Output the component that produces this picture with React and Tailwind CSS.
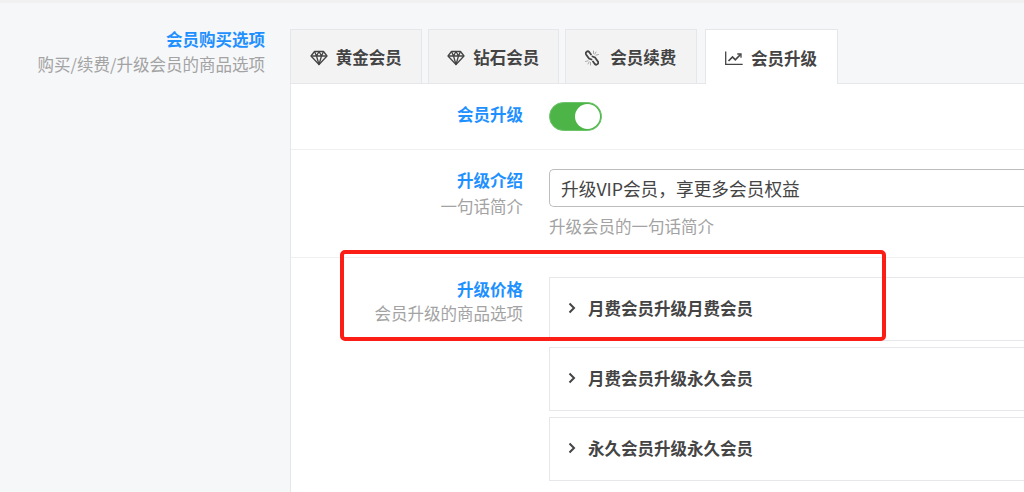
import React from "react";

function Gem() {
  return (
    <svg viewBox="0 0 18 16" fill="none" stroke="currentColor" strokeWidth="1.3" strokeLinejoin="round" className="h-[16px] w-[18px] shrink-0">
      <path d="M4.500 1.500h9l3.500 4.500-8 8.500-8-8.500z" />
      <path d="M1 6h16M6.500 6 9 14.500 11.500 6M4.500 1.500 6.500 6 9 1.500 11.500 6l2-4.500" />
    </svg>
  );
}

function LinkBroken() {
  return (
    <svg viewBox="0 0 14 16" fill="none" stroke="currentColor" strokeWidth="1.8" strokeLinecap="round" className="mr-[3px] h-[16px] w-[14px] shrink-0">
      <path d="M6 4.500 4.200 2a2 2 0 0 0-3.100 2.500L4 8.500l2.500 1" />
      <path d="M8 11.500l1.800 2.500a2 2 0 0 0 3.100-2.500L10 7.500l-2.500-1" />
      <path d="M8.500 1v2.500M11 2 9.800 4.200M13.500 4.500l-2.500.7M.5 11.500l2.500-.7M3 14l1.200-2.200M5.500 15v-2.500" strokeWidth="1" stroke="#a8a8a8" />
    </svg>
  );
}

function Chart() {
  return (
    <svg viewBox="0 0 18 16" fill="none" stroke="currentColor" className="h-[16px] w-[18px] shrink-0">
      <path d="M.7 1.500v12.800h17" strokeWidth="1.300" />
      <path d="M3.500 11 7.500 7l2.800 2.800L15.500 4.500" strokeWidth="1.700" />
      <path d="M12.300 4h3.700v3.700" strokeWidth="1.300" />
    </svg>
  );
}

function Tab({ icon, label }) {
  return (
    <div className="flex h-[54px] w-[131.500px] items-center justify-center gap-[8px] border border-b-0 border-[#e5e7eb] bg-[#f3f3f4] pt-[2px] text-[16.500px] font-bold text-[#444]">
      {icon}
      <span>{label}</span>
    </div>
  );
}

function ActiveTab({ icon, label }) {
  return (
    <div className="relative -mb-px ml-[2px] flex h-[55px] w-[133px] items-center justify-center gap-[8px] border border-b-0 border-[#e5e7eb] bg-white pt-[2px] text-[16.500px] font-bold text-[#444]">
      {icon}
      <span>{label}</span>
    </div>
  );
}

function Label({ title, sub, gap }) {
  return (
    <div className="w-[233px] shrink-0 pr-[1px] text-right">
      <div className="text-[16.500px] leading-[22px] font-bold text-[#1e90ff]">{title}</div>
      {sub && <div className={gap + " text-[16.500px] leading-[22px] text-[#a3a3a3]"}>{sub}</div>}
    </div>
  );
}

function Item({ text }) {
  return (
    <div className="flex h-[64px] items-center gap-[12px] border border-r-0 border-[#e5e7eb] pb-[2px] pl-[18px] text-[16.500px] font-bold text-[#444]">
      <svg width="8" height="12" viewBox="0 0 8 12" fill="none" stroke="#444" strokeWidth="2">
        <path d="M1.500 1.500 6 6l-4.500 4.500" />
      </svg>
      <span>{text}</span>
    </div>
  );
}

export default function App() {
  return (
    <div
      className="relative flex h-[492px] w-[1024px] overflow-hidden border-t-[3px] border-[#f1f1f2] bg-[#f6f7f9]"
      style={{ fontFamily: '"Noto Sans CJK SC", "Noto Sans", sans-serif' }}
    >
      <div className="w-[290px] shrink-0 pt-[25px] pr-[25px] text-right">
        <div className="text-[16.500px] leading-[22px] font-bold text-[#1e90ff]">会员购买选项</div>
        <div className="mt-[3px] text-[16.500px] leading-[22px] text-[#a3a3a3]">购买/续费/升级会员的商品选项</div>
      </div>
      <div className="min-w-0 flex-1 pt-[26px]">
        <div className="flex gap-[6px] border-b border-[#e5e7eb]">
          <Tab icon={<Gem />} label="黄金会员" />
          <Tab icon={<Gem />} label="钻石会员" />
          <Tab icon={<LinkBroken />} label="会员续费" />
          <ActiveTab icon={<Chart />} label="会员升级" />
        </div>
        <div className="h-[420px] border-l border-[#e5e7eb] bg-white">
          <div className="flex h-[66px] items-center border-b border-[#f0f0f0]">
            <div className="pb-[5px]">
              <Label title="会员升级" />
            </div>
            <div className="mb-[1px] ml-[25px] flex h-[29px] w-[53px] items-center justify-end rounded-full border border-[#6cc468] bg-[#4db548] pr-[1px]">
              <div className="h-[25px] w-[25px] rounded-full bg-white" />
            </div>
          </div>
          <div className="flex h-[108px] border-b border-[#f0f0f0] pt-[19px]">
            <Label title="升级介绍" sub="一句话简介" gap="mt-[4px]" />
            <div className="ml-[25px] flex-1">
              <div className="flex h-[38px] items-center rounded-l-[5px] border border-r-0 border-[#bdbdbd] pl-[11px] text-[17.700px] text-[#444]">
                升级VIP会员，享更多会员权益
              </div>
              <div className="mt-[8px] text-[16.500px] leading-[22px] text-[#a3a3a3]">升级会员的一句话简介</div>
            </div>
          </div>
          <div className="flex pt-[19px]">
            <div className="pt-[1px]">
              <Label title="升级价格" sub="会员升级的商品选项" gap="mt-[2px]" />
            </div>
            <div className="ml-[25px] flex flex-1 flex-col gap-[6px]">
              <Item text="月费会员升级月费会员" />
              <Item text="月费会员升级永久会员" />
              <Item text="永久会员升级永久会员" />
            </div>
          </div>
        </div>
      </div>
      <div className="absolute top-[247px] left-[340px] h-[91px] w-[546px] rounded-[5px] border-[4px] border-[#fb1e16]" />
    </div>
  );
}
